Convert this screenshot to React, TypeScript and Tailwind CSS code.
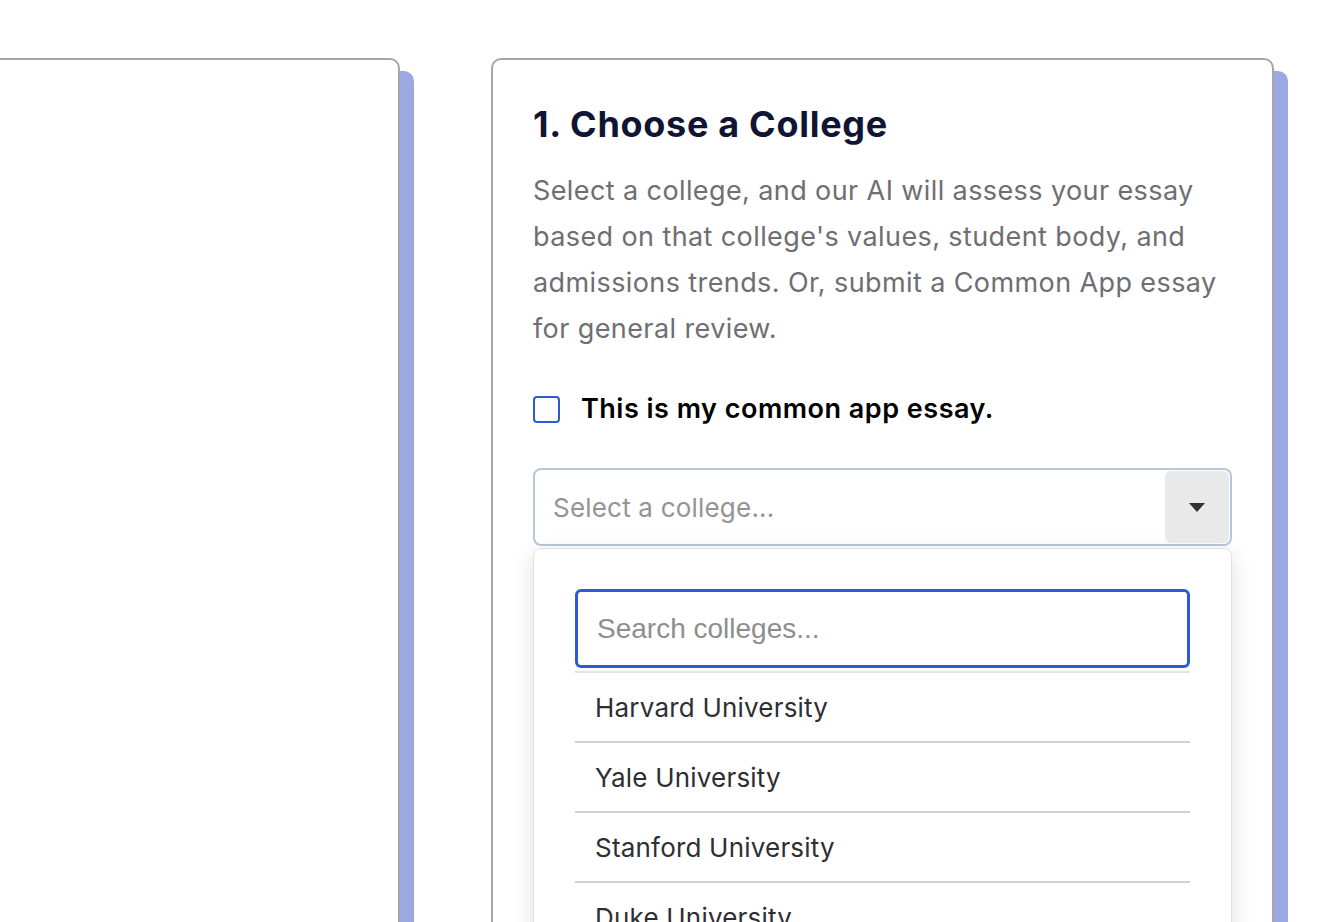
import { useState } from 'react'

const colleges = ['Harvard University', 'Yale University', 'Stanford University', 'Duke University', 'Princeton University']

export default function App() {
  const [common, setCommon] = useState(false)
  const [query, setQuery] = useState('')

  const font = { fontFamily: 'Inter, "Noto Sans", sans-serif' }

  return (
    <div className="h-[922px] overflow-hidden bg-white" style={font}>
      <div className="flex items-start gap-[91px] pt-[58px]">
        {/* Left card (mostly off screen) */}
        <div className="-ml-[100px] h-[1000px] w-[500px] shrink-0 rounded-[10px] border-2 border-[#a6a6a6] bg-white shadow-[14px_13px_0_0_#9ba9e3]" />

        {/* Right card */}
        <div className="h-[1000px] w-[783px] shrink-0 rounded-[10px] border-2 border-[#a6a6a6] bg-white px-[40px] pt-[40px] shadow-[14px_13px_0_0_#9ba9e3]">
          <h2 className="text-[36px] leading-[48px] font-bold tracking-[0.7px] text-[#101534]">1. Choose a College</h2>
          <p className="mt-[20px] text-[27px] leading-[46px] tracking-[0.4px] text-[#6e6e73]">
            Select a college, and our AI will assess your essay based on that college's values, student body, and
            admissions trends. Or, submit a Common App essay for general review.
          </p>

          <label className="mt-[42px] flex cursor-pointer items-center gap-[21px]">
            <span
              className={
                'flex h-[27px] w-[27px] items-center justify-center rounded-[4px] border-2 border-[#2b5bd6] ' +
                (common ? 'bg-[#2b5bd6]' : 'bg-white')
              }
            >
              <input
                type="checkbox"
                className="hidden"
                checked={common}
                onChange={(e) => setCommon(e.target.checked)}
              />
            </span>
            <span className="text-[27px] leading-[30px] font-semibold tracking-[0.5px] text-black">
              This is my common app essay.
            </span>
          </label>

          {/* Select */}
          <div className="mt-[44px]">
            <div className="flex h-[78px] items-center justify-between rounded-[8px] border-2 border-[#b7c6da] bg-white pl-[18px] pr-[1px]">
              <span className="text-[26px] tracking-[0.2px] text-[#949494]">Select a college...</span>
              <span className="flex h-[72px] w-[64px] items-center justify-center rounded-[6px] bg-[#e9e9e9]">
                <svg width="16" height="9" viewBox="0 0 16 9">
                  <path d="M0 0h16L8 9z" fill="#333" />
                </svg>
              </span>
            </div>

            {/* Dropdown */}
            <div className="mt-[2px] h-[600px] rounded-[8px] border border-[#e2e2e2] bg-white px-[41px] pt-[40px] shadow-[0_6px_22px_rgba(0,0,0,0.13)]">
              <input
                autoFocus
                value={query}
                onChange={(e) => setQuery(e.target.value)}
                placeholder="Search colleges..."
                className="h-[79px] w-full rounded-[6px] border-[3px] border-[#2b5bd6] px-[19px] text-[28px] text-[#333] placeholder-[#8e8e8e] outline-none"
                style={{ fontFamily: '"Liberation Sans", Arial, sans-serif' }}
              />
              <div className="mt-[3px] h-[2px] bg-[#e4e4e4]" />
              <ul>
                {colleges
                  .filter((c) => c.toLowerCase().includes(query.toLowerCase()))
                  .map((c) => (
                    <li
                      key={c}
                      className="flex h-[70px] items-center border-b-2 border-[#d0d0d0] pl-[20px] text-[26px] tracking-[0.2px] text-[#2e2e33]"
                    >
                      {c}
                    </li>
                  ))}
              </ul>
            </div>
          </div>
        </div>
      </div>
    </div>
  )
}
